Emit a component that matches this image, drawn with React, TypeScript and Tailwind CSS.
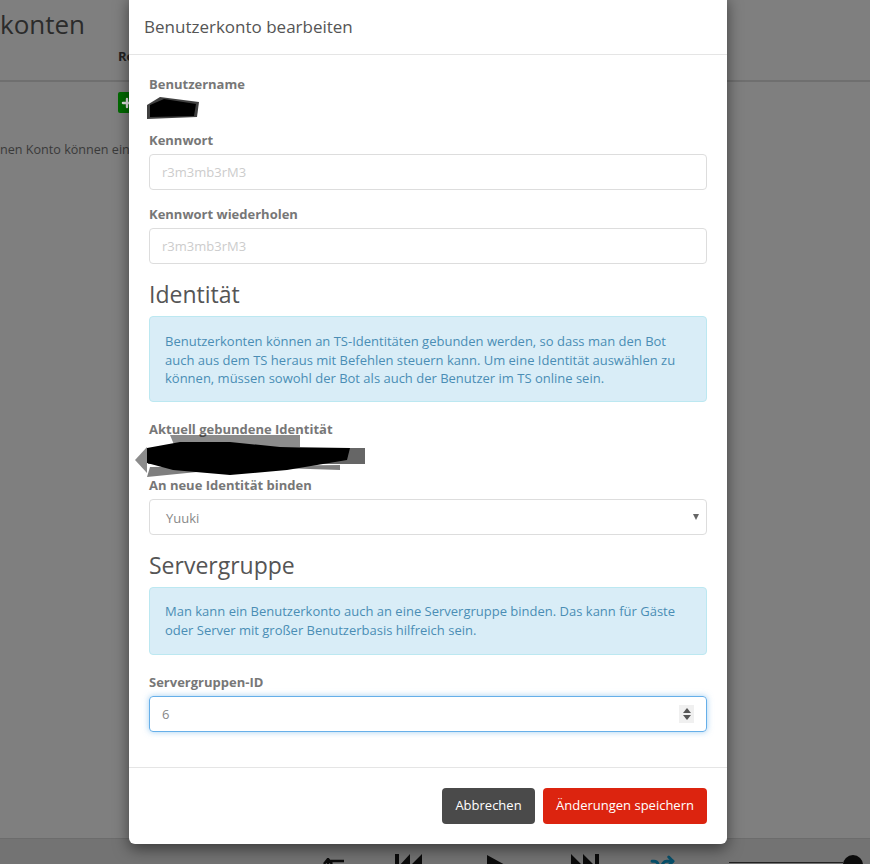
import { Plus, Shuffle } from "lucide-react";

const font = { fontFamily: '"Open Sans", sans-serif' };

function Field({ label, placeholder }: { label: string; placeholder: string }) {
  return (
    <div className="mb-[15px]">
      <label className="block text-[13px] leading-[19px] font-bold text-[#777] mb-[4px]">{label}</label>
      <div className="h-[36px] border border-[#ddd] rounded-[4px] px-3 pt-[1px] flex items-center text-[13px] text-[#ccc]">
        {placeholder}
      </div>
    </div>
  );
}

function Scribble({ wide }: { wide?: boolean }) {
  if (wide) {
    return (
      <svg className="absolute left-[-16px] top-[-6px] blur-[0.7px]" width="234" height="46" viewBox="0 0 234 46">
        <path d="M37 2H167V14H42z" fill="#000" opacity="0.45" />
        <path d="M15 15H232V31H15z" fill="#000" opacity="0.6" />
        <path d="M2 27L14 14V40z" fill="#000" opacity="0.45" />
        <path d="M17 34L207 32V37L147 35L64 39L14 44z" fill="#000" opacity="0.5" />
        <path d="M14 15L47 9L97 9L147 14L217 15L214 27L154 37L97 42L40 37L14 30z" fill="#000" />
      </svg>
    );
  }
  return (
    <svg className="absolute left-[-3px] top-[1px] blur-[0.7px]" width="56" height="26" viewBox="0 0 56 26">
      <path d="M1 10L14 2L53 7L51 22L1 24z" fill="#000" opacity="0.75" />
      <path d="M4 10L18 4L50 9L48 21L4 22z" fill="#000" />
    </svg>
  );
}

export default function App() {
  return (
    <div style={font} className="relative flex h-[864px] w-[870px] flex-col overflow-hidden bg-[#7f7f7f] text-[13px]">
      {/* Seite hinter dem Dialog */}
      <div className="flex-1">
        <div className="h-[82px] border-b-2 border-[#6f6f6f]">
          <div className="text-[26px] leading-[36px] text-[#2b2b2b] pt-[6px]">konten</div>
          <div className="pl-[118px] pt-[5px] font-bold text-[#222] leading-[18px]">Ro</div>
        </div>
        <div className="pl-[118px] pt-[10px]">
          <div className="w-[18px] h-[21px] rounded-[2px] bg-[#006b00] flex items-center justify-center">
            <Plus size={14} stroke="#e8e8e8" strokeWidth={4} />
          </div>
        </div>
        <div className="pt-[27px] text-[12.6px] leading-[19px] text-[#3a3a3a] whitespace-nowrap">nen Konto können eine</div>
      </div>

      {/* Player */}
      <div className="h-[26px] shrink-0 bg-[#737373] border-t border-[#6c6c6c] flex items-start overflow-hidden pl-[322px] pt-[15px]">
        <svg className="mt-[4px]" width="24" height="12" viewBox="0 0 24 12" fill="none" stroke="#0b0b0b" strokeWidth="2.5">
          <path d="M6 12V3H22M2 6L6 1L10 6" />
        </svg>
        <svg className="ml-[48px]" width="30" height="12" viewBox="0 0 30 12" fill="#0b0b0b">
          <path d="M1 0H5V12H1zM5 12L16 0V12zM16 12L28 0V12z" />
        </svg>
        <svg className="ml-[63px] mt-[1px]" width="22" height="22" viewBox="0 0 22 22" fill="#0b0b0b">
          <path d="M0 0L20 11L0 22z" />
        </svg>
        <svg className="ml-[61px]" width="30" height="12" viewBox="0 0 30 12" fill="#0b0b0b">
          <path d="M1 0L13 12H1zM13 0L25 12H13zM25 0H29V12H25z" />
        </svg>
        <Shuffle className="ml-[50px] mt-[1px]" size={25} stroke="#07506b" strokeWidth={2.8} />
        <div className="ml-[54px] mt-[8px] w-[114px] h-[1px] bg-[#222]" />
        <div className="mt-[1px] w-[20px] h-[20px] rounded-full bg-[#0b0b0b]" />
      </div>

      {/* Dialog */}
      <div className="absolute left-[129px] top-[-6px] w-[598px] h-[850px] bg-white rounded-[6px] shadow-[0_5px_15px_rgba(0,0,0,0.5)] flex flex-col">
        <div className="h-[61px] shrink-0 border-b border-[#e5e5e5] pl-[15px] pt-[21px] text-[17px] leading-[24px] text-[#555]">
          Benutzerkonto bearbeiten
        </div>
        <div className="flex-1 px-[20px] pt-[20px]">
          <label className="block text-[13px] leading-[19px] font-bold text-[#777]">Benutzername</label>
          <div className="relative h-[37px]">
            <Scribble />
          </div>
          <Field label="Kennwort" placeholder="r3m3mb3rM3" />
          <Field label="Kennwort wiederholen" placeholder="r3m3mb3rM3" />

          <h3 className="text-[23px] leading-[28px] text-[#555] mt-[16px] mb-[8px]">Identität</h3>
          <div className="h-[86px] mb-[18px] bg-[#d9edf7] border border-[#bce8f1] rounded-[4px] px-[15px] pt-[15px] text-[13px] leading-[18.57px] text-[#4a8db5]">
            Benutzerkonten können an TS-Identitäten gebunden werden, so dass man den Bot auch aus dem TS heraus mit Befehlen steuern kann. Um eine Identität auswählen zu können, müssen sowohl der Bot als auch der Benutzer im TS online sein.
          </div>

          <label className="block text-[13px] leading-[19px] font-bold text-[#777]">Aktuell gebundene Identität</label>
          <div className="relative h-[37px]">
            <Scribble wide />
          </div>
          <label className="block text-[13px] leading-[19px] font-bold text-[#777] mb-[4px]">An neue Identität binden</label>
          <div className="relative h-[36px] border border-[#ddd] rounded-[4px] pl-4 pt-[3px] flex items-center text-[13px] text-[#888] bg-white">
            Yuuki
            <span className="absolute right-[7px] top-[14px] w-0 h-0 border-x-[3px] border-x-transparent border-t-[6px] border-t-[#666]" />
          </div>

          <h3 className="text-[23px] leading-[28px] text-[#555] mt-[16px] mb-[8px]">Servergruppe</h3>
          <div className="h-[68px] mb-[18px] bg-[#d9edf7] border border-[#bce8f1] rounded-[4px] px-[15px] pt-[14px] text-[13px] leading-[18.57px] text-[#4a8db5]">
            Man kann ein Benutzerkonto auch an eine Servergruppe binden. Das kann für Gäste oder Server mit großer Benutzerbasis hilfreich sein.
          </div>

          <label className="block text-[13px] leading-[19px] font-bold text-[#777] mb-[4px]">Servergruppen-ID</label>
          <div className="relative h-[36px] border border-[#66afe9] rounded-[4px] px-3 pt-[1px] flex items-center text-[13px] text-[#888] shadow-[0_0_6px_rgba(102,175,233,0.6)]">
            6
            <div className="absolute right-[12px] top-[8px] w-[15px] h-[18px] bg-[#f0f0f0] flex flex-col items-center justify-center gap-[2px]">
              <span className="w-0 h-0 border-x-[4px] border-x-transparent border-b-[5px] border-b-[#555]" />
              <span className="w-0 h-0 border-x-[4px] border-x-transparent border-t-[5px] border-t-[#555]" />
            </div>
          </div>
        </div>
        <div className="h-[77px] shrink-0 border-t border-[#e5e5e5] pr-[20px] pt-[20px] flex justify-end gap-[8px]">
          <button className="h-[36px] w-[93px] rounded-[4px] bg-[#4a4a4a] text-white text-[13px]">Abbrechen</button>
          <button className="h-[36px] w-[164px] rounded-[4px] bg-[#dc240f] text-white text-[13px]">Änderungen speichern</button>
        </div>
      </div>
    </div>
  );
}
